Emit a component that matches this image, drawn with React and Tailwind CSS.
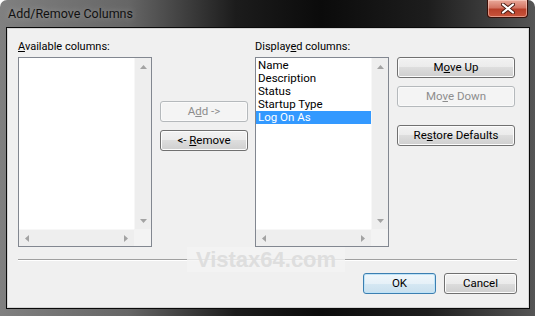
import React from 'react'
import clsx from 'clsx'

const font = "font-['Roboto','Noto_Sans',sans-serif]"

const Btn = ({ children, disabled, isDefault, className }) => (
  <div
    className={clsx(
      'flex h-[21px] items-center justify-center rounded-[3px] border text-[11.5px] leading-none',
      disabled
        ? 'border-[#b5b9bc] bg-[#f4f4f4] text-[#8d8d8d] shadow-[inset_0_0_0_1px_#fafafa]'
        : isDefault
          ? 'border-[#3c7fb1] bg-[linear-gradient(180deg,#f0f7fb_0%,#e6f1f8_50%,#d6e8f3_50%,#c9e0ee_100%)] text-black shadow-[inset_0_0_0_1px_#bfe3f7]'
          : 'border-[#707070] bg-[linear-gradient(180deg,#f2f2f2_0%,#ebebeb_50%,#dddddd_50%,#cfcfcf_100%)] text-black shadow-[inset_0_0_0_1px_#fcfcfc]',
      className
    )}
  >
    <span>{children}</span>
  </div>
)

const Arrow = ({ dir }) => {
  const pts = {
    up: '0,4 3.5,0 7,4',
    down: '0,0 3.5,4 7,0',
    left: '4,0 0,3.5 4,7',
    right: '0,0 4,3.5 0,7',
  }[dir]
  const vertical = dir === 'up' || dir === 'down'
  return (
    <svg width={vertical ? 7 : 4} height={vertical ? 4 : 7} viewBox={vertical ? '0 0 7 4' : '0 0 4 7'}>
      <polygon points={pts} fill="#a3a3a3" />
    </svg>
  )
}

// listbox with disabled scrollbars on both axes
const ListBox = ({ items = [], selected }) => (
  <div className="flex h-[190px] w-[134px] flex-col border border-[#828790] bg-white">
    <div className="flex min-h-0 flex-1">
      <div className="flex-1 pt-[1px]">
        {items.map((it) => (
          <div
            key={it}
            className={clsx(
              'h-[13px] pl-[2px] text-[11.5px] leading-[13px] whitespace-nowrap',
              it === selected ? 'bg-[#3399ff] text-white' : 'text-black'
            )}
          >
            {it}
          </div>
        ))}
      </div>
      <div className="flex w-[17px] flex-col justify-between border-l border-[#f7f7f7] bg-[#eeeeee]">
        <div className="flex h-[17px] items-center justify-center"><Arrow dir="up" /></div>
        <div className="flex h-[17px] items-center justify-center"><Arrow dir="down" /></div>
      </div>
    </div>
    <div className="flex h-[17px]">
      <div className="flex flex-1 items-center justify-between border-t border-[#f7f7f7] bg-[#eeeeee] px-[6px]">
        <Arrow dir="left" />
        <Arrow dir="right" />
      </div>
      <div className="w-[17px] bg-[#f3f3f3]" />
    </div>
  </div>
)

const App = () => {
  return (
    <div className={clsx(font, 'relative flex h-[316px] w-[535px] flex-col overflow-hidden rounded-t-[7px] bg-[linear-gradient(90deg,#808080_0%,#666666_24%,#1c1c1c_44%,#0b0b0b_60%,#1d1d1d_80%,#555555_100%)] pb-[7px] pl-[6px] pr-[5px] text-black')}>
      {/* title bar */}
      <div className="flex h-[27px] items-start justify-between">
        <span className="pl-[2px] pt-[5px] text-[12.5px] leading-[18px] text-[#111] [text-shadow:0_0_6px_rgba(255,255,255,0.35)]">
          Add/Remove Columns
        </span>
        <div className="mr-[2px] flex h-[18px] w-[41px] items-center justify-center rounded-b-[4px] border border-t-0 border-[#3a1008] bg-[linear-gradient(180deg,#e9a99a_0%,#d37563_45%,#b8402a_55%,#c9553c_100%)] shadow-[inset_0_0_0_1px_rgba(255,220,210,0.5)]">
          <svg width="14" height="11" viewBox="0 0 14 11">
            <path d="M2 1.5 L12 9.5 M12 1.5 L2 9.5" stroke="#4a1a10" strokeWidth="4" strokeLinecap="round" />
            <path d="M2 1.5 L12 9.5 M12 1.5 L2 9.5" stroke="#ffffff" strokeWidth="2.2" strokeLinecap="round" />
          </svg>
        </div>
      </div>

      {/* client area */}
      <div className="flex min-h-0 flex-1 flex-col border border-[#0a0a0a]">
        <div className="flex flex-1 flex-col border border-[#d4d4d4] bg-[#f0f0f0] pl-[10px] pr-[11px] pt-[10px]">
          <div className="flex items-start">
            <div className="flex flex-col">
              <div className="mb-[3px] h-[15px] text-[11px] leading-[15px]">
                <span className="underline">A</span>vailable columns:
              </div>
              <ListBox />
            </div>

            <div className="ml-[8px] flex w-[88px] flex-col gap-[8px] pt-[62px]">
              <Btn disabled>A<span className="underline">d</span>d -&gt;</Btn>
              <Btn>&lt;- <span className="underline">R</span>emove</Btn>
            </div>

            <div className="ml-[7px] flex flex-col">
              <div className="mb-[3px] h-[15px] text-[11px] leading-[15px]">
                Display<span className="underline">e</span>d columns:
              </div>
              <ListBox
                items={['Name', 'Description', 'Status', 'Startup Type', 'Log On As']}
                selected="Log On As"
              />
            </div>

            <div className="ml-[8px] flex w-[118px] flex-col pt-[18px]">
              <Btn>M<span className="underline">o</span>ve Up</Btn>
              <Btn disabled className="mt-[8px]">Mo<span className="underline">v</span>e Down</Btn>
              <Btn className="mt-[18px]">Re<span className="underline">s</span>tore Defaults</Btn>
            </div>
          </div>

          <div className="mt-[12px] border-t border-b border-t-[#a0a0a0] border-b-white" />

          <div className="mt-[12px] flex justify-end gap-[8px]">
            <Btn isDefault className="w-[73px]">OK</Btn>
            <Btn className="w-[73px]">Cancel</Btn>
          </div>
        </div>
      </div>

      {/* watermark */}
      <div className="absolute left-[187px] top-[247px] flex h-[25px] w-[158px] items-center justify-center bg-[#f4f4f4]/80">
        <span className="font-['Liberation_Sans',Arial,sans-serif] text-[22px] font-bold leading-none text-[#dedede]">
          Vistax64.com
        </span>
      </div>
    </div>
  )
}

export default App
